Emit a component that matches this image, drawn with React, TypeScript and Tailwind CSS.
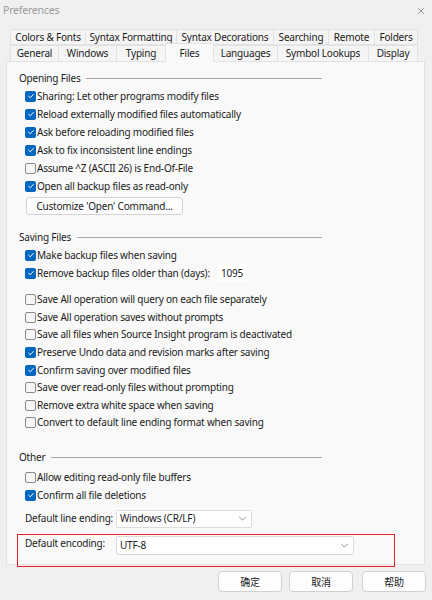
const font = { fontFamily: '"Noto Sans", "Noto Sans CJK SC", sans-serif' }

function Check({ on }: { on?: boolean }) {
    return on ? (
        <span className="flex h-[11px] w-[11px] shrink-0 items-center justify-center rounded-[2px] bg-[#0067c0]">
            <svg viewBox="0 0 10 10" className="h-[8px] w-[8px]">
                <path d="M2 5.2 L4.1 7.2 L8 3" fill="none" stroke="#fff" strokeWidth="1.2" strokeLinecap="round" strokeLinejoin="round" />
            </svg>
        </span>
    ) : (
        <span className="h-[11px] w-[11px] shrink-0 rounded-[2px] border border-[#8a8a8a] bg-[#f6f6f6]" />
    )
}

function Row({ on, label, h = "h-[18px]", children }: { on?: boolean; label: string; h?: string; children?: React.ReactNode }) {
    return (
        <div className={`flex items-center pl-[18px] ${h}`}>
            <Check on={on} />
            <span className="ml-[1px] whitespace-nowrap">{label}</span>
            {children}
        </div>
    )
}

function Heading({ title, className }: { title: string; className: string }) {
    return (
        <div className={`flex h-[18px] w-[315px] items-center pl-[12px] ${className}`}>
            <span className="whitespace-nowrap">{title}</span>
            <span className="ml-[6px] h-px flex-1 bg-[#a8a8a8]" />
        </div>
    )
}

function Chevron() {
    return (
        <svg viewBox="0 0 10 6" className="h-[5px] w-[9px]">
            <path d="M1 1 L5 5 L9 1" fill="none" stroke="#7a7a7a" strokeWidth="1" />
        </svg>
    )
}

const row1 = [
    ["Colors & Fonts", "w-[76px]"],
    ["Syntax Formatting", "w-[92px]"],
    ["Syntax Decorations", "w-[98px]"],
    ["Searching", "w-[56px]"],
    ["Remote", "w-[47px]"],
    ["Folders", "w-[44px]"],
]

const row2 = [
    ["General", "w-[49px]"],
    ["Windows", "w-[59px]"],
    ["Typing", "w-[50px]"],
    ["Files", "w-[49px]"],
    ["Languages", "w-[65px]"],
    ["Symbol Lookups", "w-[92px]"],
    ["Display", "w-[50px]"],
]

export default function App() {
    return (
        <div className="relative h-[600px] w-[432px] overflow-hidden bg-[#f0f0f0] text-[10px] tracking-[-0.2px] text-[#1b1b1b]" style={font}>
            {/* title bar */}
            <div className="flex h-[20px] items-center justify-between pl-[3px] pr-[7px] pt-[2px]">
                <span className="text-[10.5px] text-[#9a9a9a]">Preferences</span>
                <svg viewBox="0 0 10 10" className="h-[8px] w-[8px]">
                    <path d="M1 1 L9 9 M9 1 L1 9" stroke="#8a8a8a" strokeWidth="1" />
                </svg>
            </div>

            {/* tabs */}
            <div className="mt-[9px] flex pl-[10px]">
                {row1.map(([t, w]) => (
                    <div key={t} className={`-ml-px flex h-[16px] items-center justify-center border border-[#e2e2e2] bg-[#f5f5f5] first:ml-0 ${w}`}>
                        {t}
                    </div>
                ))}
            </div>
            <div className="flex h-[16px] pl-[10px]">
                {row2.map(([t, w]) =>
                    t === "Files" ? (
                        <div key={t} className={`relative z-10 -ml-px -mt-[2px] flex h-[19px] items-center justify-center border border-b-0 border-[#e2e2e2] bg-[#f9f9f9] ${w}`}>
                            {t}
                        </div>
                    ) : (
                        <div key={t} className={`-ml-px flex h-[16px] items-center justify-center border border-b-0 border-[#e2e2e2] bg-[#f5f5f5] first:ml-0 ${w}`}>
                            {t}
                        </div>
                    )
                )}
            </div>

            {/* panel */}
            <div className="ml-[6px] h-[504px] w-[419px] border border-[#e2e2e2] bg-[#f9f9f9]">
                <Heading title="Opening Files" className="mt-[7px]" />
                <Row on label="Sharing: Let other programs modify files" />
                <Row on label="Reload externally modified files automatically" />
                <Row on label="Ask before reloading modified files" />
                <Row on label="Ask to fix inconsistent line endings" />
                <Row label="Assume ^Z (ASCII 26) is End-Of-File" />
                <Row on label="Open all backup files as read-only" />
                <div className="ml-[19px] mt-[2px] flex h-[18px] w-[157px] items-center justify-center rounded-[3px] border border-[#d4d4d4] bg-[#fdfdfd]">
                    Customize 'Open' Command...
                </div>

                <Heading title="Saving Files" className="mt-[13px]" />
                <Row on label="Make backup files when saving" />
                <Row on label="Remove backup files older than (days):">
                    <span className="ml-[7px] flex h-[18px] w-[30px] items-center bg-white pl-[4px]">1095</span>
                </Row>
                <div className="mt-[9px]">
                    <Row h="h-[17.6px]" label="Save All operation will query on each file separately" />
                    <Row h="h-[17.6px]" label="Save All operation saves without prompts" />
                    <Row h="h-[17.6px]" label="Save all files when Source Insight program is deactivated" />
                    <Row h="h-[17.6px]" on label="Preserve Undo data and revision marks after saving" />
                    <Row h="h-[17.6px]" on label="Confirm saving over modified files" />
                    <Row h="h-[17.6px]" label="Save over read-only files without prompting" />
                    <Row h="h-[17.6px]" label="Remove extra white space when saving" />
                    <Row h="h-[17.6px]" label="Convert to default line ending format when saving" />
                </div>

                <Heading title="Other" className="mt-[17px]" />
                <div className="mt-[2px]">
                    <Row h="h-[17.5px]" label="Allow editing read-only file buffers" />
                    <Row h="h-[17.5px]" on label="Confirm all file deletions" />
                </div>
                <div className="mt-[6px] flex items-center pl-[18px]">
                    <span className="w-[91px] whitespace-nowrap">Default line ending:</span>
                    <div className="flex h-[18px] w-[136px] items-center justify-between rounded-[2px] border border-[#dcdcdc] bg-white pl-[3px] pr-[4px]">
                        <span>Windows (CR/LF)</span>
                        <Chevron />
                    </div>
                </div>
                <div className="mt-[8px] flex items-start pl-[18px]">
                    <span className="w-[91px] whitespace-nowrap">Default encoding:</span>
                    <div className="flex h-[19px] w-[238px] items-center justify-between rounded-[2px] border border-[#dcdcdc] bg-white pl-[3px] pr-[4px]">
                        <span>UTF-8</span>
                        <Chevron />
                    </div>
                </div>
            </div>

            {/* buttons */}
            <div className="mt-[6px] flex justify-end pr-[6px]" style={{ fontFamily: '"Noto Sans CJK SC", sans-serif' }}>
                <div className="flex h-[21px] w-[64px] items-center justify-center rounded-[4px] border border-[#d0d0d0] bg-[#fdfdfd]">确定</div>
                <div className="ml-[7px] flex h-[21px] w-[64px] items-center justify-center rounded-[4px] border border-[#d0d0d0] bg-[#fdfdfd]">取消</div>
                <div className="ml-[9px] flex h-[21px] w-[64px] items-center justify-center rounded-[4px] border border-[#d0d0d0] bg-[#fdfdfd]">帮助</div>
            </div>

            {/* annotation */}
            <div className="pointer-events-none absolute left-[17px] top-[534px] h-[33px] w-[378px] border-[1.5px] border-[#e8202a]" />
        </div>
    )
}
